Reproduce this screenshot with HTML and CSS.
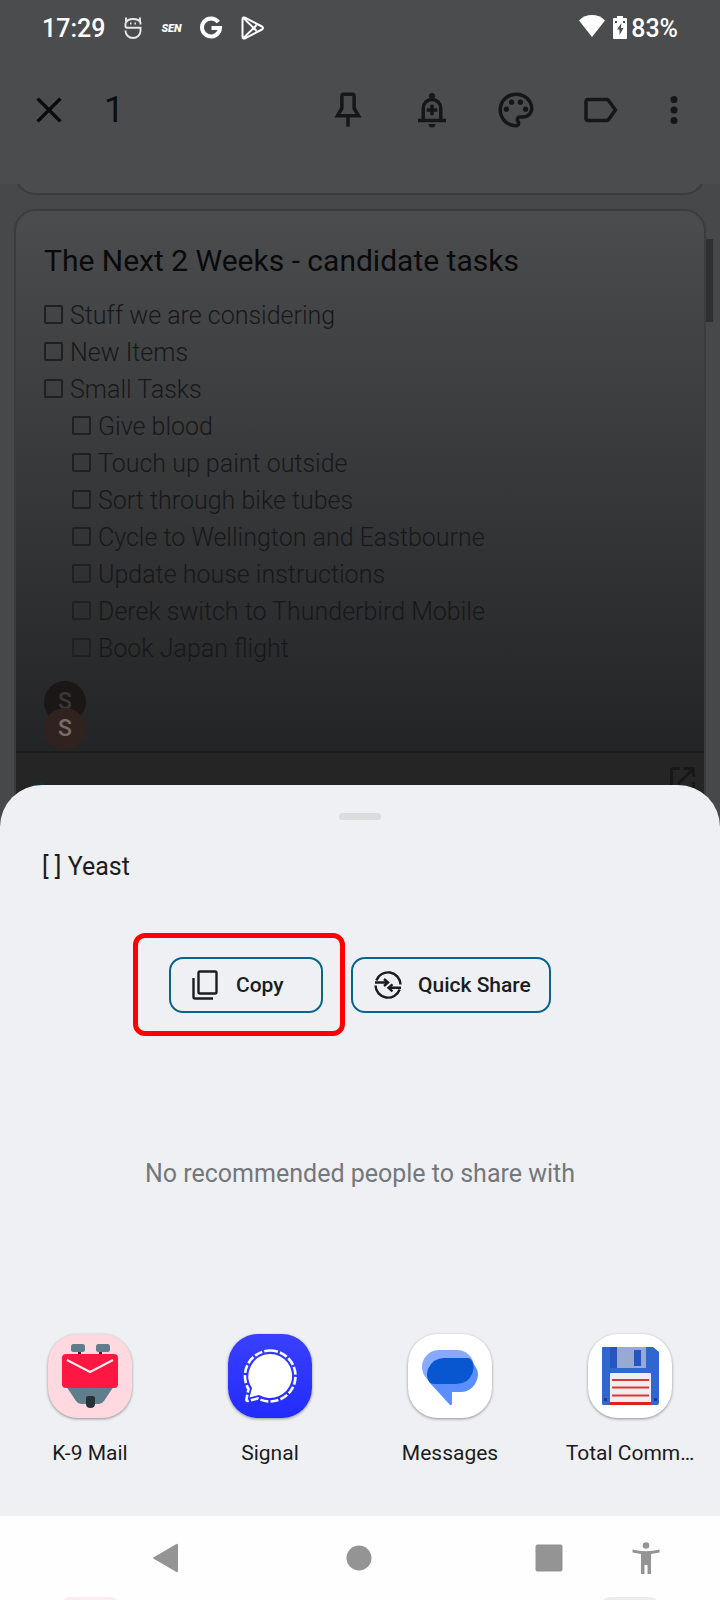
FILE: index.html
```html
<!DOCTYPE html>
<html lang="en">
<head>
<meta charset="utf-8">
<meta name="viewport" content="width=device-width, initial-scale=1">
<title>Share note</title>
<link rel="stylesheet" href="styles.css">
</head>
<body>
<div class="screen">
  <main class="notes">
    <div class="status">
      <span class="clock">17:29</span>
      <svg class="status-icon" viewBox="0 0 24 24" fill="none" stroke="#e8e8e8" stroke-width="1.900"><path d="M19.500 8.500V6.500Q18 3 12 3T4.500 7.500v2.500q0 1.800 1.500 1.800h13.500V15a7.500 7 0 0 1-15 0v-.5M5 5.500V1.500M19 5.500V1.500"/><path d="M9 7.500h1.500M13.500 7.500H15" stroke-width="2"/></svg>
      <span class="sen">SEN</span>
      <svg class="status-icon" viewBox="0 0 24 24" fill="none" stroke="#fff" stroke-width="4"><path d="M19.300 6.200A9 9 0 1 0 21 12h-8.500"/></svg>
      <svg class="status-icon play" viewBox="0 0 24 24" fill="none" stroke="#fff" stroke-width="2" stroke-linejoin="round"><path d="M2.500 1.500q-1 .5-1 1.500v18q0 1 1 1.500 1 .3 2-.3L21 13.500q2-1.500 0-3L4.500 1.800q-1-.6-2-.3zM2.500 2l13 12.800M2.500 22l13-12.800M15.500 9.200 13 12l2.500 2.800"/></svg>
      <svg class="wifi" viewBox="0 0 26 22" fill="#fff"><path d="M0 5.500C7-1.800 19-1.800 26 5.500L13 22z"/></svg>
      <svg class="battery" viewBox="0 0 14 23"><path fill="#fff" d="M4 0h6v2h3q1 0 1 1v19q0 1-1 1H1q-1 0-1-1V3q0-1 1-1h3z"/><path fill="#4b4c4d" d="M8.500 7 4 13.500h2.500V19l4-7H8zM2 5h2v2H2zM10 5h2v2h-2z"/></svg>
      <span class="percent">83%</span>
    </div>
    <header class="toolbar">
      <button class="tool close" aria-label="Close"><svg viewBox="0 0 24 24" stroke="#090a0b" stroke-width="2"><path d="m5.500 5.500 13 13m0-13-13 13"/></svg></button>
      <span class="count">1</span>
      <button class="tool" aria-label="Pin"><svg viewBox="0 0 24 24" fill="none" stroke="#151617" stroke-width="2"><path d="M9.500 3h5q1 0 1 1v7l2.500 4.300H6L8.500 11V4q0-1 1-1z"/><path d="M12 15v6.500"/></svg></button>
      <button class="tool" aria-label="Add reminder"><svg viewBox="0 0 24 24" fill="none" stroke="#151617" stroke-width="2"><path d="M4 18h16M7 18v-7a5 5 0 0 1 10 0v7M12 9v6M9 12h6"/><path fill="#151617" stroke="none" d="M10.300 5V4a1.700 1.700 0 0 1 3.400 0v1zM10 20h4a2 2 0 0 1-4 0z"/></svg></button>
      <button class="tool" aria-label="Change colour"><svg viewBox="0 0 24 24" fill="#151617"><path d="M12 22C6.490 22 2 17.510 2 12S6.490 2 12 2s10 4.040 10 9c0 3.310-2.690 6-6 6h-1.770c-.28 0-.5.22-.5.5 0 .12.050.23.130.33.410.47.640 1.060.640 1.670A2.500 2.500 0 0 1 12 22zm0-18c-4.410 0-8 3.590-8 8s3.590 8 8 8c.28 0 .5-.22.500-.5a.54.540 0 0 0-.14-.35c-.41-.46-.63-1.050-.63-1.650a2.500 2.500 0 0 1 2.500-2.500H16c2.210 0 4-1.790 4-4 0-3.860-3.590-7-8-7z"/><circle cx="6.500" cy="11.500" r="1.500"/><circle cx="9.500" cy="7.500" r="1.500"/><circle cx="14.500" cy="7.500" r="1.500"/><circle cx="17.500" cy="11.500" r="1.500"/></svg></button>
      <button class="tool" aria-label="Label"><svg viewBox="0 0 24 24" fill="#151617"><path d="M17.630 5.840C17.270 5.330 16.670 5 16 5L5 5.010C3.900 5.010 3 5.900 3 7v10c0 1.100.9 1.990 2 1.990L16 19c.67 0 1.270-.33 1.630-.84L22 12l-4.370-6.160zM16 17H5V7h11l3.550 5L16 17z"/></svg></button>
      <button class="tool more" aria-label="More"><svg viewBox="0 0 24 24" fill="#151617"><circle cx="12" cy="6" r="2"/><circle cx="12" cy="12" r="2"/><circle cx="12" cy="18" r="2"/></svg></button>
    </header>
    <div class="list">
      <div class="peek"><div class="peek-card"></div></div>
      <article class="card">
        <h1 class="title">The Next 2 Weeks - candidate tasks</h1>
        <ul class="tasks">
          <li><label class="task"><input type="checkbox">Stuff we are considering</label></li>
          <li><label class="task"><input type="checkbox">New Items</label></li>
          <li><label class="task"><input type="checkbox">Small Tasks</label></li>
          <li><label class="task sub"><input type="checkbox">Give blood</label></li>
          <li><label class="task sub"><input type="checkbox">Touch up paint outside</label></li>
          <li><label class="task sub"><input type="checkbox">Sort through bike tubes</label></li>
          <li><label class="task sub"><input type="checkbox">Cycle to Wellington and Eastbourne</label></li>
          <li><label class="task sub"><input type="checkbox">Update house instructions</label></li>
          <li><label class="task sub"><input type="checkbox">Derek switch to Thunderbird Mobile</label></li>
          <li><label class="task sub"><input type="checkbox">Book Japan flight</label></li>
        </ul>
        <div class="people"><span class="avatar back">S</span><span class="avatar front">S</span></div>
        <div class="preview"><svg class="thumb" viewBox="0 0 60 60" fill="#10303c"><path d="M27 18v20H0v-6z"/></svg><svg class="open" viewBox="0 0 24 24" fill="#161717"><path d="M19 19H5V5h5V3H5a2 2 0 0 0-2 2v14a2 2 0 0 0 2 2h14a2 2 0 0 0 2-2v-5h-2zM13 3v2h4.600L8 14.600 9.400 16 19 6.400V10h2V3z"/></svg></div>
      </article>
      <div class="scrollbar"></div>
    </div>
  </main>

  <section class="sheet" aria-label="Share">
    <div class="handle"></div>
    <p class="shared">[ ] Yeast</p>
    <div class="actions">
      <div class="highlight">
        <button class="chip copy"><svg class="copy-icon" viewBox="0 0 26 30" fill="none" stroke="#1b1c1e" stroke-width="2.400"><rect x="6.500" y="1.500" width="18" height="22" rx="1.500"/><path d="M1.500 8v19q0 1.500 1.500 1.500h18"/></svg>Copy</button>
      </div>
      <button class="chip quick"><svg class="quick-icon" viewBox="0 0 28 28" fill="none" stroke="#1b1c1e" stroke-width="2.400"><path d="M2.300 9.500a12.500 12.500 0 0 1 24.200 4M25.700 18.500a12.500 12.500 0 0 1-24.200-4M1 11.500h12M27 16.800H15"/><path d="m10 8 4 3.500-4 3.500M18.500 13.300l-4 3.500 4 3.500"/></svg>Quick Share</button>
    </div>
    <p class="empty">No recommended people to share with</p>
    <div class="apps">
      <button class="app"><span class="tile k9"><svg viewBox="0 0 84 84"><path fill="#263238" d="M30 16h3v6h-3zM51 16h3v6h-3z"/><rect x="23" y="10" width="14" height="8" rx="2.500" fill="#607d8b"/><rect x="48" y="10" width="14" height="8" rx="2.500" fill="#607d8b"/><path fill="#607d8b" d="M18 52h48L56 67q-2 3-5 3H33q-3 0-5-3z"/><rect x="14" y="20" width="56" height="34" rx="4" fill="#ff1744"/><path d="m19 26 23 12 23-12" fill="none" stroke="#ffebee" stroke-width="2"/><path fill="#263238" d="M38 64q0-2 2-2h5q2 0 2 2v6q0 4-4.500 4T38 70z"/></svg></span><span class="name">K-9 Mail</span></button>
      <button class="app"><span class="tile signal"><svg viewBox="0 0 84 84"><path fill="none" stroke="#fff" stroke-width="2.600" stroke-dasharray="8 2.200" d="M42 16.500a25.500 25.500 0 1 1-12 48l-10 2.500q-2 0-1.500-2l2-10A25.500 25.500 0 0 1 42 16.500z"/><path fill="#fff" d="M42 20a22 22 0 1 1-11 41l-9.500 2.500L24 54A22 22 0 0 1 42 20z"/></svg></span><span class="name">Signal</span></button>
      <button class="app"><span class="tile"><svg viewBox="0 0 84 84"><rect x="14" y="16" width="52" height="34" rx="17" fill="#87a9ff"/><path fill="#5b8fff" d="M65 29c3 4 5 7 5 12-1 10-8 17-17 17h-9v11q0 3-2 2L21 48l5-4h30z"/><path fill="#0957d0" d="M36 24h24q3 0 5 5 1.500 5-.5 10-4 11-16.500 11H26q-4 0-6-4-2-5 0-11 5-11 16-11z"/></svg></span><span class="name">Messages</span></button>
      <button class="app"><span class="tile"><svg viewBox="0 0 84 84"><path fill="#2f66d0" d="M14 13h46l5 0 6 5v51q0 2-2 2H15q-1 0-1-2V14q0-1 1-1z"/><path fill="#2855bd" d="M22 13h7v21h-7z"/><path fill="#98aad2" d="M29 13h29v21H29z"/><path fill="#2855bd" d="M46 16h7v16h-7z"/><path fill="#efefef" d="M22 40q0-1 1-1h39q1 0 1 1v28H22z"/><path stroke="#df3438" stroke-width="2" d="M24 46h37M24 53.500h37M24 61.500h37"/><path fill="#e21f20" d="M22 68h41v3H22z"/><path fill="#1c3c88" d="M16 64h3v3h-3zM66 64h3v3h-3z"/></svg></span><span class="name">Total Comm…</span></button>
    </div>
    <nav class="nav">
      <button class="key back-key" aria-label="Back"><svg viewBox="0 0 32 32" fill="#949494"><path d="M3.700 15.200 26 2.200q2-1 2 1v25.600q0 2-2 1L3.700 16.800q-1.200-.8 0-1.600z"/></svg></button>
      <button class="key" aria-label="Home"><svg viewBox="0 0 32 32" fill="#949494"><circle cx="16" cy="16" r="12.500"/></svg></button>
      <button class="key recents" aria-label="Recents"><svg viewBox="0 0 32 32" fill="#949494"><rect x="2.500" y="2.500" width="27" height="27" rx="2"/></svg></button>
      <button class="key" aria-label="Accessibility"><svg viewBox="0 0 32 32" fill="#949494"><circle cx="16" cy="3.500" r="3.300"/><path d="M2.500 7.500Q16 11 29.500 7.500v3L21 12v20h-3.500v-9h-3v9H11V12l-8.500-1.500z"/></svg></button>
      <div class="next-row"><span class="next pink"></span><span></span><span></span><span class="next grey"></span></div>
    </nav>
  </section>
</div>
</body>
</html>
```
FILE: styles.css
```css
* { box-sizing: border-box; }
body { margin: 0; font-family: Roboto, "Liberation Sans", sans-serif; }
button { margin: 0; padding: 0; border: 0; background: none; font: inherit; color: inherit; }
p, h1, ul { margin: 0; padding: 0; font-weight: 400; }
svg { display: block; }

.screen { display: grid; min-height: 100vh; }
.notes, .sheet { grid-area: 1 / 1; min-width: 0; }
.notes { background: #474849; overflow: hidden; }

.status { display: flex; align-items: center; height: 56px; padding: 0 42px; background: #4b4c4d; color: #fff; font-size: 25px; font-weight: 500; }
.clock { margin-right: 16px; }
.status-icon { width: 24px; height: 24px; margin-right: 16px; }
.sen { width: 24px; margin-right: 14px; font-size: 11px; font-weight: 900; font-style: italic; }
.play { margin: 0 0 0 2px; }
.wifi { width: 26px; height: 22px; margin: 0 8px 4px auto; }
.battery { width: 14px; height: 23px; margin: 0 4px 2px 0; }

.toolbar { display: flex; align-items: center; height: 128px; padding: 0 14px 20px 7px; background: #4b4c4d; }
.tool { display: flex; justify-content: center; width: 84px; }
.tool svg { width: 42px; height: 42px; }
.more { width: 64px; }
.count { margin-right: auto; padding-left: 13px; font-size: 36px; line-height: 48px; color: #0c0d0e; }

.list { position: relative; padding: 0 14px; }
.peek { display: flex; align-items: flex-end; height: 11px; overflow: hidden; }
.peek-card { flex: 1; height: 60px; border: 2px solid #3b3c3d; border-radius: 22px; background: #4b4c4d; }
.card { margin-top: 14px; border: 2px solid #3b3c3d; border-radius: 22px 22px 0 0; background: linear-gradient(#4b4c4d, #232425 540px); }
.title { padding: 30px 28px 16px; font-size: 30px; line-height: 40px; color: #090a0b; font-weight: 400; }
.tasks { padding: 0 28px; list-style: none; }
.task { display: flex; align-items: center; height: 37px; gap: 7px; font-size: 25px; font-weight: 300; color: #17181a; }
.task input { appearance: none; width: 19px; height: 19px; margin: 0 0 2px; border: 2px solid #1f2021; border-radius: 2px; }
.sub { padding-left: 28px; }
.people { display: flex; flex-direction: column; padding: 14px 28px 1px; }
.avatar { width: 42px; height: 42px; border-radius: 50%; font-size: 23px; line-height: 42px; text-align: center; font-weight: 500; }
.back { background: #1b1716; color: #3a3737; }
.front { margin-top: -15px; background: #30221f; color: #746d6b; }
.preview { display: flex; justify-content: space-between; height: 140px; padding: 10px 5px 0 0; border-top: 2px solid #1d1e1e; background: #242524; }
.open { width: 33px; height: 33px; }
.thumb { width: 60px; height: 60px; }
.scrollbar { position: absolute; top: 55px; right: 7px; width: 7px; height: 83px; background: #2e2f30; }

.sheet { position: relative; align-self: end; padding-top: 28px; border-radius: 42px 42px 0 0; background: #eff0f3; color: #1b1c1e; overflow: hidden; }
.handle { width: 42px; height: 7px; margin: 0 auto; border-radius: 4px; background: #dcdcdd; }
.shared { padding: 31px 42px 0; font-size: 25px; line-height: 32px; }
.actions { display: flex; justify-content: center; align-items: center; gap: 6px; margin-top: 50px; padding-right: 36px; }
.highlight { padding: 19px 17px 18px 31px; border: 5px solid #f00; border-radius: 12px; }
.chip { display: flex; align-items: center; height: 56px; border: 2px solid #07658c; border-radius: 14px; font-size: 21px; font-weight: 500; }
.copy { width: 154px; padding-left: 21px; gap: 18px; }
.quick { width: 200px; padding-left: 21px; gap: 16px; }
.copy-icon { width: 26px; height: 30px; }
.quick-icon { width: 28px; height: 28px; }
.empty { margin-top: 122px; text-align: center; font-size: 25px; line-height: 32px; color: #74777b; }
.apps { display: grid; grid-template-columns: repeat(4, 1fr); margin-top: 144px; padding-bottom: 48px; }
.app { display: flex; flex-direction: column; align-items: center; gap: 20px; min-width: 0; }
.tile { width: 84px; height: 84px; border-radius: 30px; background: #fff; box-shadow: 0 1px 3px #0006; overflow: hidden; }
.k9 { background: #ffd9df; }
.signal { background: linear-gradient(#3940ff, #222bff); }
.name { font-size: 21px; line-height: 30px; white-space: nowrap; }

.nav { position: relative; display: grid; grid-template-columns: 70px 2fr 2fr 46px 1fr 1fr 26px; align-items: center; height: 84px; background: #fefefe; }
.key { display: flex; justify-content: center; }
.back-key { grid-column: 2; }
.recents { grid-column: 5; }
.key svg { width: 32px; height: 32px; }
.next-row { position: absolute; inset: auto 0 0; display: grid; grid-template-columns: repeat(4, 1fr); justify-items: center; height: 3px; overflow: hidden; }
.next { width: 60px; height: 20px; border-radius: 20px; }
.pink { background: #ffecef; }
.grey { background: #ececec; }
```
